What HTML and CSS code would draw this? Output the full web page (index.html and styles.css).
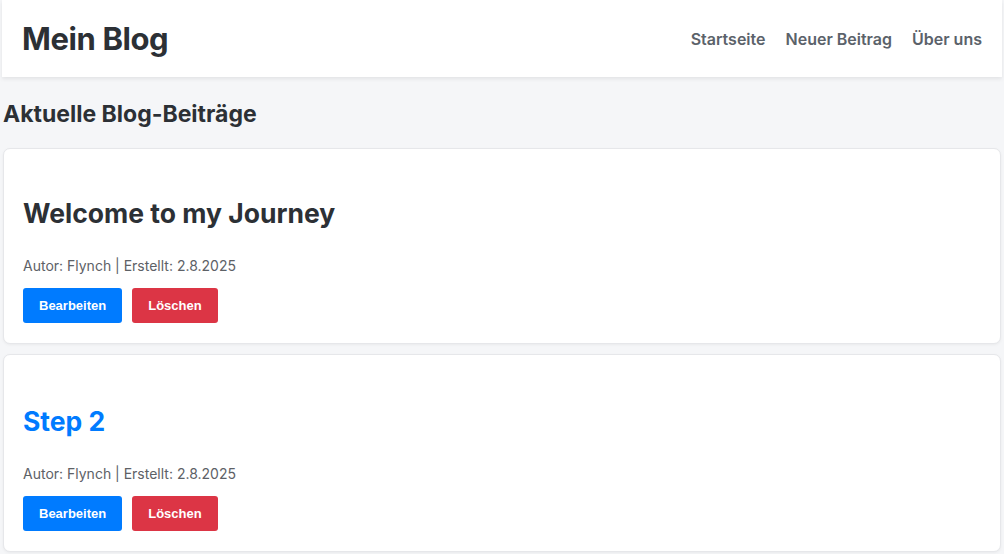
FILE: index.html
```html
<!DOCTYPE html>
<html lang="de">
<head>
<meta charset="utf-8">
<title>Mein Blog</title>
<link rel="stylesheet" href="styles.css">
</head>
<body>
<header class="site-header">
  <h1 class="brand">Mein Blog</h1>
  <nav class="nav">
    <a href="#">Startseite</a>
    <a href="#">Neuer Beitrag</a>
    <a href="#">Über uns</a>
  </nav>
</header>
<main class="content">
  <h2 class="page-title">Aktuelle Blog-Beiträge</h2>
  <article class="card">
    <h3 class="post-title">Welcome to my Journey</h3>
    <p class="meta">Autor: Flynch | Erstellt: 2.8.2025</p>
    <div class="actions">
      <button class="btn btn-edit">Bearbeiten</button>
      <button class="btn btn-delete">Löschen</button>
    </div>
  </article>
  <article class="card">
    <h3 class="post-title link">Step 2</h3>
    <p class="meta">Autor: Flynch | Erstellt: 2.8.2025</p>
    <div class="actions">
      <button class="btn btn-edit">Bearbeiten</button>
      <button class="btn btn-delete">Löschen</button>
    </div>
  </article>
</main>
</body>
</html>
```
FILE: styles.css
```css
* { box-sizing: border-box; }
html, body { margin: 0; padding: 0; }
body {
  background: #f5f6f8;
  font-family: Inter, "Noto Sans", sans-serif;
  color: #2c3035;
}
.site-header {
  margin: 0 2px;
  height: 77px;
  background: #fff;
  box-shadow: 0 2px 4px rgba(0,0,0,0.08);
  display: flex;
  align-items: center;
  justify-content: space-between;
  padding: 0 20px;
}
.brand {
  margin: 0;
  font-size: 31px;
  font-weight: 700;
  letter-spacing: -0.4px;
}
.nav { display: flex; gap: 20px; }
.nav a {
  text-decoration: none;
  color: #5b626a;
  font-size: 16px;
  font-weight: 600;
}
.content { padding: 0 3px; }
.page-title {
  margin: 23px 0 20px;
  font-size: 23px;
  font-weight: 700;
  line-height: 28px;
}
.card {
  background: #fff;
  border: 1px solid #e6e7ea;
  border-radius: 7px;
  box-shadow: 0 1px 3px rgba(0,0,0,0.05);
  padding: 46px 19px 20px;
  margin-bottom: 10px;
}
.post-title {
  margin: 0;
  font-size: 26.5px;
  font-weight: 700;
  line-height: 36px;
}
.post-title.link { color: #007bff; margin-top: 2px; }
.meta {
  margin: 25px 0 12px;
  font-size: 14px;
  color: #5d6166;
  line-height: 20px;
}
.actions { display: flex; gap: 10px; }
.btn {
  border: none;
  border-radius: 3px;
  height: 35px;
  padding: 0 16px;
  font-family: "Liberation Sans", Arial, sans-serif;
  font-size: 13px;
  font-weight: 700;
  color: #fff;
  cursor: pointer;
}
.btn-edit { background: #007bff; }
.btn-delete { background: #dc3545; }
```
